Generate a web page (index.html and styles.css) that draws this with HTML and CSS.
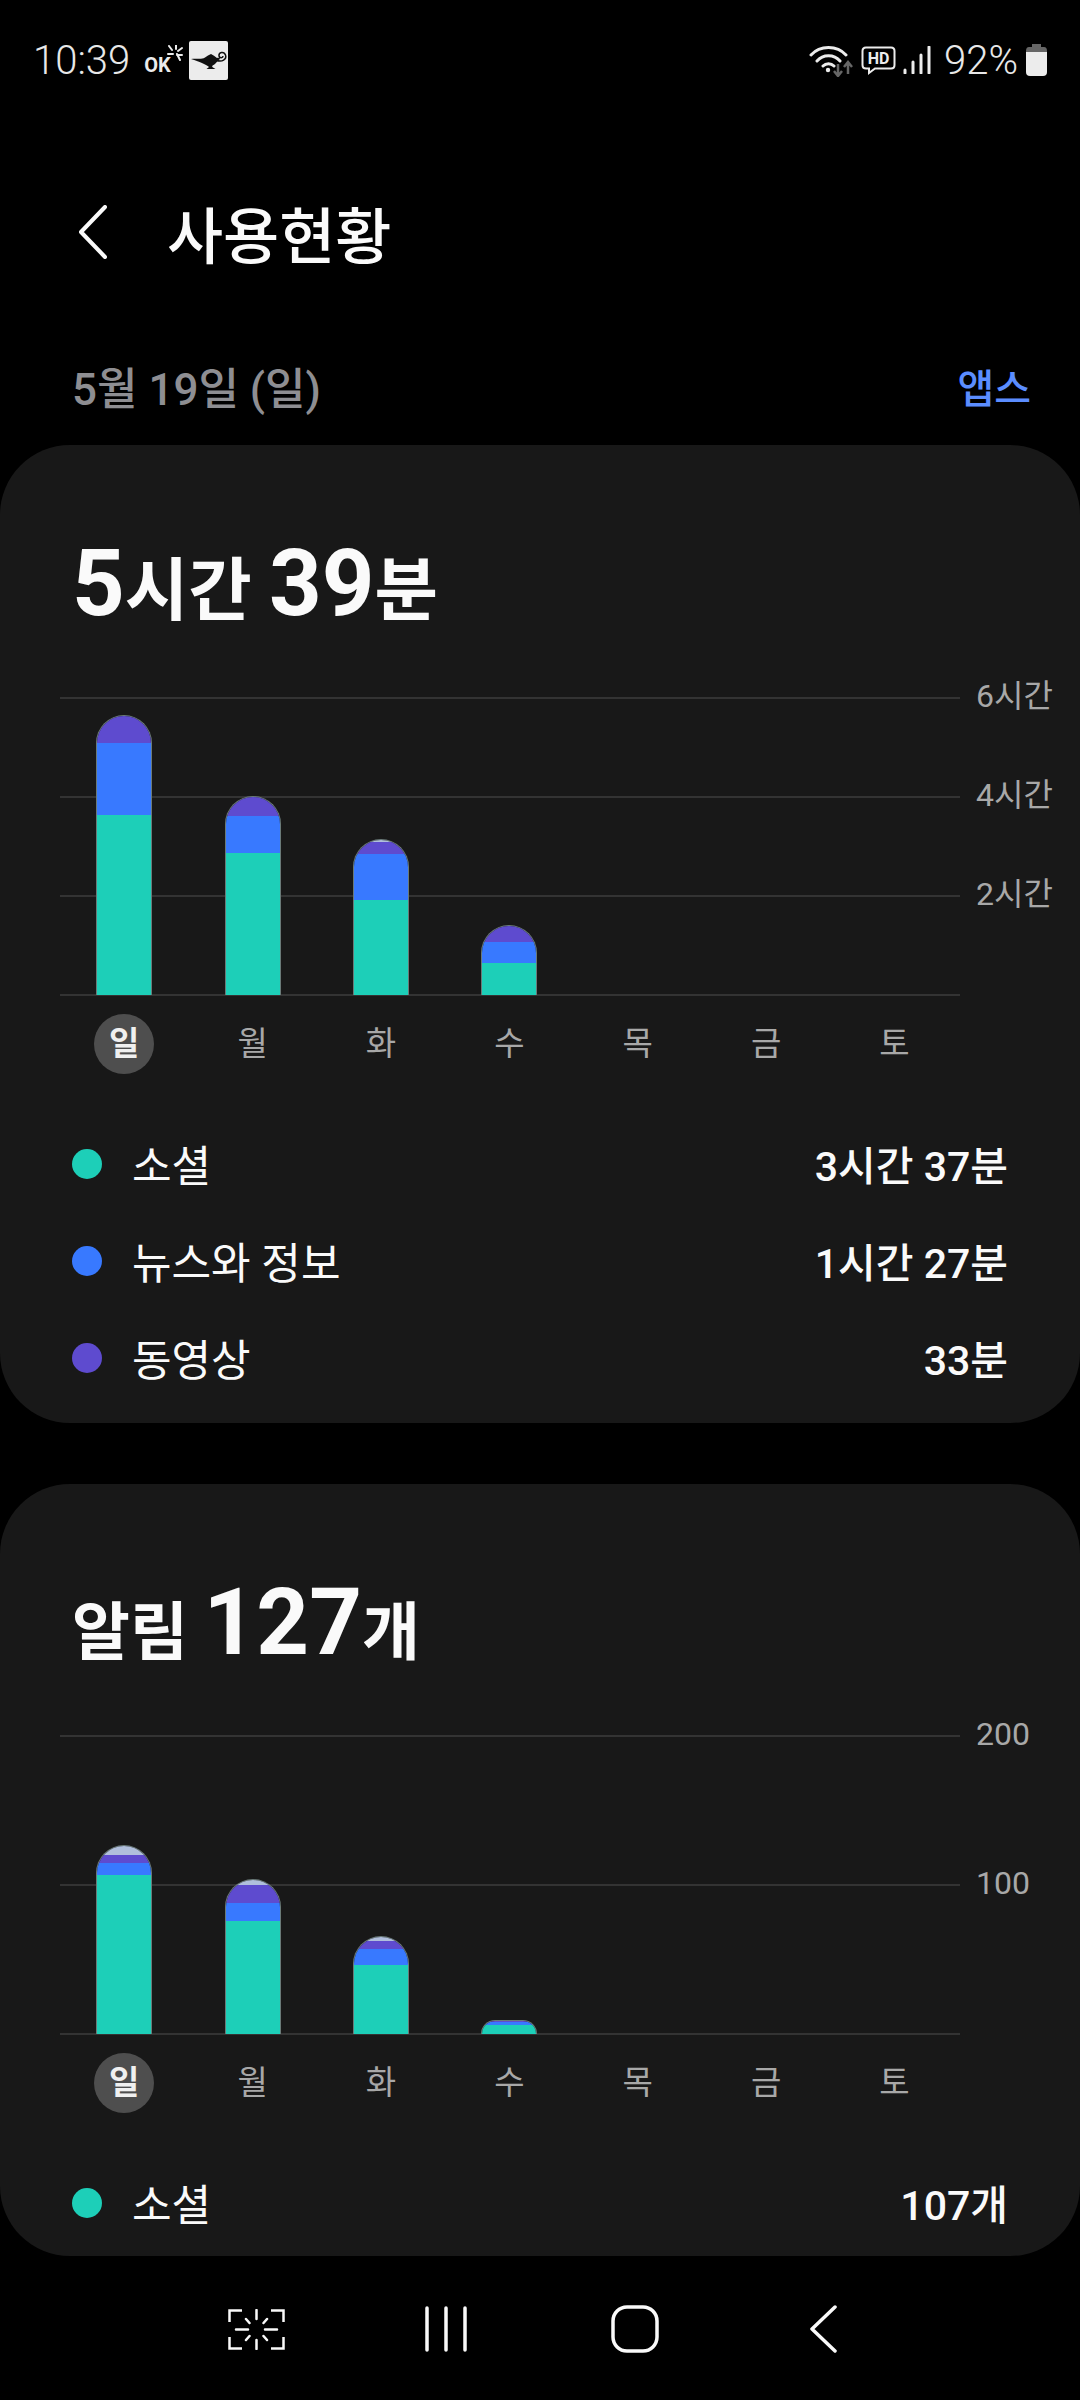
FILE: index.html

```html
<!DOCTYPE html>
<html lang="ko">
<head>
    <meta charset="UTF-8">
    <meta name="viewport" content="width=device-width, initial-scale=1.0">
    <title>사용현황</title>
    <link rel="stylesheet" href="styles.css">
</head>
<body>
    <div class="status-bar">
        <div class="status-left">
            <span class="clock">10:39</span>
            <span class="ok-icon">
                <span class="ok-text">OK</span>
                <svg class="ok-spark" viewBox="0 0 18 18" width="18" height="18">
                    <path d="M4 1 L7 5 M11 0 V4 M17 3 L13 6 M3 9 H8 M17 10 H12 M12 9 L15 15" fill="none" stroke="#ececec" stroke-width="2" stroke-linecap="round"/>
                </svg>
            </span>
            <svg class="lamp-icon" viewBox="0 0 39 39" width="39" height="39">
                <rect width="39" height="39" rx="2" fill="#ececec"/>
                <path d="M2 18 C8 17 12 19 16 16.5 C18 15 20 14 22 13 C24 14 26 15.5 28 17 C30 16.5 31 17 31 18 C29 19 28 21 26 23 C24 24.5 22 25 24 26.5 L26.5 28 H17.5 L20 26 C19 25 17 24 15 23 C11 20.5 6 19.5 2 18 Z" fill="#111"/>
                <path d="M27 19 C33 22 38 18 36.5 14 C35 10 29.5 11 30 15 C30.5 17.5 34 17 34 15" fill="none" stroke="#111" stroke-width="1.5"/>
            </svg>
        </div>
        <div class="status-right">
            <svg class="wifi-icon" viewBox="0 0 45 33" width="45" height="33">
                <path d="M2 11 C11 1 28 1 37 11 M8 17 C14 10 25 10 31 17 M14 22 C17 19 22 19 25 22" fill="none" stroke="#ececec" stroke-width="3" stroke-linecap="round"/>
                <circle cx="19" cy="26" r="2.2" fill="#ececec"/>
                <path d="M29 20 V32 M25 27 L29 32 L33 27 M39 30 V19 M35 23 L39 18 L43 23" fill="none" stroke="#666" stroke-width="2.5"/>
            </svg>
            <svg class="hd-icon" viewBox="0 0 35 29" width="35" height="29">
                <path d="M5 1.5 H30 Q33.5 1.5 33.5 5 V19 Q33.5 22.5 30 22.5 H14 L8 27 V22.5 H5 Q1.5 22.5 1.5 19 V5 Q1.5 1.5 5 1.5 Z" fill="none" stroke="#ececec" stroke-width="2"/>
                <text x="17.5" y="18" class="hd-text">HD</text>
            </svg>
            <svg class="signal-icon" viewBox="0 0 28 28" width="28" height="28">
                <path d="M2 24 V27 M10 16 V27 M18 9 V27 M26 1 V27" fill="none" stroke="#ececec" stroke-width="3" stroke-linecap="round"/>
            </svg>
            <span class="battery-text">92%</span>
            <svg class="battery-icon" viewBox="0 0 21 32" width="21" height="32">
                <path d="M6 0 H15 V3 H18 Q21 3 21 7 V9 H0 V7 Q0 3 3 3 H6 Z" fill="#666"/>
                <path d="M0 8 H21 V28 Q21 32 17 32 H4 Q0 32 0 28 Z" fill="#ececec"/>
            </svg>
        </div>
    </div>

    <div class="top-bar">
        <svg class="back-icon" viewBox="0 0 29 54" width="29" height="54">
            <path d="M27 2 L3 27 L27 52" fill="none" stroke="#fafafa" stroke-width="4" stroke-linecap="round" stroke-linejoin="round"/>
        </svg>
        <h1 class="page-title">사용현황</h1>
    </div>

    <div class="date-row">
        <span class="date">5월 19일 (일)</span>
        <span class="apps-link">앱스</span>
    </div>

    <section class="card">
        <h2 class="total"><span class="num">5</span>시간 <span class="num">39</span>분</h2>
        <div class="chart">
            <div class="grid">
                <div class="tick"><div class="tick-line"></div><span class="tick-label">6시간</span></div>
                <div class="tick"><div class="tick-line"></div><span class="tick-label">4시간</span></div>
                <div class="tick"><div class="tick-line"></div><span class="tick-label">2시간</span></div>
                <div class="tick"><div class="tick-line"></div></div>
            </div>
            <div class="bars">
                <div class="bar">
                    <div class="seg purple" style="height:27px"></div>
                    <div class="seg blue" style="height:72px"></div>
                    <div class="seg teal" style="height:180px"></div>
                </div>
                <div class="bar">
                    <div class="seg purple" style="height:19px"></div>
                    <div class="seg blue" style="height:37px"></div>
                    <div class="seg teal" style="height:142px"></div>
                </div>
                <div class="bar">
                    <div class="seg light" style="height:2px"></div>
                    <div class="seg purple" style="height:12px"></div>
                    <div class="seg blue" style="height:46px"></div>
                    <div class="seg teal" style="height:95px"></div>
                </div>
                <div class="bar">
                    <div class="seg purple" style="height:16px"></div>
                    <div class="seg blue" style="height:21px"></div>
                    <div class="seg teal" style="height:32px"></div>
                </div>
            </div>
        </div>
        <div class="days">
            <span class="day today">일</span>
            <span class="day">월</span>
            <span class="day">화</span>
            <span class="day">수</span>
            <span class="day">목</span>
            <span class="day">금</span>
            <span class="day">토</span>
        </div>
        <ul class="legend">
            <li class="legend-row"><span class="dot teal"></span><span class="legend-name">소셜</span><span class="legend-value">3시간 37분</span></li>
            <li class="legend-row"><span class="dot blue"></span><span class="legend-name">뉴스와 정보</span><span class="legend-value">1시간 27분</span></li>
            <li class="legend-row"><span class="dot purple"></span><span class="legend-name">동영상</span><span class="legend-value">33분</span></li>
        </ul>
    </section>

    <section class="card card-alerts">
        <h2 class="total total-alerts">알림 <span class="num">127</span>개</h2>
        <div class="chart chart-alerts">
            <div class="grid">
                <div class="tick"><div class="tick-line"></div><span class="tick-label">200</span></div>
                <div class="tick"><div class="tick-line"></div><span class="tick-label">100</span></div>
                <div class="tick"><div class="tick-line"></div></div>
            </div>
            <div class="bars">
                <div class="bar">
                    <div class="seg light" style="height:9px"></div>
                    <div class="seg purple" style="height:8px"></div>
                    <div class="seg blue" style="height:12px"></div>
                    <div class="seg teal" style="height:159px"></div>
                </div>
                <div class="bar">
                    <div class="seg light" style="height:5px"></div>
                    <div class="seg purple" style="height:18px"></div>
                    <div class="seg blue" style="height:18px"></div>
                    <div class="seg teal" style="height:113px"></div>
                </div>
                <div class="bar">
                    <div class="seg light" style="height:4px"></div>
                    <div class="seg purple" style="height:8px"></div>
                    <div class="seg blue" style="height:16px"></div>
                    <div class="seg teal" style="height:69px"></div>
                </div>
                <div class="bar">
                    <div class="seg purple" style="height:1px"></div>
                    <div class="seg blue" style="height:3px"></div>
                    <div class="seg teal" style="height:9px"></div>
                </div>
            </div>
        </div>
        <div class="days">
            <span class="day today">일</span>
            <span class="day">월</span>
            <span class="day">화</span>
            <span class="day">수</span>
            <span class="day">목</span>
            <span class="day">금</span>
            <span class="day">토</span>
        </div>
        <ul class="legend">
            <li class="legend-row"><span class="dot teal"></span><span class="legend-name">소셜</span><span class="legend-value">107개</span></li>
        </ul>
    </section>

    <nav class="nav-bar">
        <svg viewBox="0 0 57 41" width="57" height="41">
            <path d="M1.5 13 V1.5 H14 M43 1.5 H55.5 V13 M1.5 28 V39.5 H14 M43 39.5 H55.5 V28" fill="none" stroke="#fafafa" stroke-width="2.5"/>
            <path d="M28.5 1 V10 M28.5 31 V40 M8 20.5 H20 M37 20.5 H49 M18 10 L21.5 14 M39 10 L35.5 14 M18 31 L21.5 27 M39 31 L35.5 27" fill="none" stroke="#fafafa" stroke-width="2.5" stroke-linecap="round"/>
        </svg>
        <svg viewBox="0 0 42 46" width="42" height="46">
            <path d="M2 2 V44 M21 2 V44 M40 2 V44" fill="none" stroke="#fafafa" stroke-width="3.5" stroke-linecap="round"/>
        </svg>
        <svg viewBox="0 0 48 48" width="48" height="48">
            <rect x="2" y="2" width="44" height="44" rx="14" fill="none" stroke="#fafafa" stroke-width="3.5"/>
        </svg>
        <svg viewBox="0 0 27 48" width="27" height="48">
            <path d="M25 2 L2 24 L25 46" fill="none" stroke="#fafafa" stroke-width="3.5" stroke-linecap="round" stroke-linejoin="round"/>
        </svg>
    </nav>
</body>
</html>
```

FILE: styles.css

```css
* {
    box-sizing: border-box;
}
body {
    width: 1080px;
    height: 2400px;
    margin: 0;
    overflow: hidden;
    background-color: #000;
    color: #fafafa;
    font-family: Roboto, "Noto Sans CJK KR", sans-serif;
}

/* status bar */
.status-bar {
    display: flex;
    justify-content: space-between;
    align-items: center;
    height: 120px;
    padding: 0 33px;
}
.status-left,
.status-right {
    display: flex;
    align-items: center;
}
.clock {
    font-size: 40px;
    font-weight: 300;
    color: #e8e8e8;
}
.ok-icon {
    display: flex;
    align-items: flex-start;
    margin-left: 14px;
}
.ok-text {
    margin-top: 10px;
    font-size: 20px;
    font-weight: 700;
    line-height: 20px;
    color: #ececec;
}
.ok-spark {
    margin-left: -6px;
}
.lamp-icon {
    margin-left: 6px;
}
.status-right {
    gap: 7px;
}
.hd-text {
    font-size: 16px;
    font-weight: 700;
    text-anchor: middle;
    fill: #ececec;
}
.battery-text {
    margin: 0 1px 0 6px;
    font-size: 40px;
    font-weight: 300;
    color: #e8e8e8;
}

/* header */
.top-bar {
    display: flex;
    align-items: center;
    gap: 60px;
    height: 224px;
    padding-left: 78px;
}
.page-title {
    margin: 0;
    font-size: 61px;
    font-weight: 500;
}
.date-row {
    display: flex;
    justify-content: space-between;
    align-items: center;
    height: 88px;
    margin-bottom: 13px;
    padding: 0 49px 5px 72px;
}
.date {
    font-size: 44px;
    font-weight: 500;
    color: #8e8e92;
}
.apps-link {
    font-size: 40px;
    font-weight: 500;
    color: #5b8dff;
}

/* cards */
.card {
    padding: 79px 0 17px;
    border-radius: 70px;
    background-color: #181818;
}
.card-alerts {
    margin-top: 61px;
    padding-bottom: 5px;
}
.total {
    height: 120px;
    margin: 0 0 53px;
    padding-left: 72px;
    font-size: 69px;
    font-weight: 700;
    line-height: 120px;
}
.total-alerts {
    margin-bottom: 52px;
    font-size: 63px;
}
.num {
    font-size: 92px;
}

/* chart */
.chart {
    position: relative;
    height: 299px;
    margin-left: 60px;
}
.chart-alerts {
    height: 300px;
}
.grid {
    display: flex;
    flex-direction: column;
    justify-content: space-between;
    height: 100%;
}
.tick {
    display: flex;
    align-items: center;
    height: 2px;
}
.tick-line {
    flex: none;
    width: 900px;
    height: 2px;
    background-color: #333;
}
.tick-label {
    margin: 0 0 4px 16px;
    font-size: 32px;
    line-height: 40px;
    color: #a8a8a8;
    white-space: nowrap;
}
.bars {
    position: absolute;
    left: 0;
    bottom: 1px;
    display: grid;
    grid-template-columns: repeat(7, 128.4px);
    justify-items: center;
    align-items: end;
}
.bar {
    display: flex;
    flex-direction: column;
    width: 56px;
    overflow: hidden;
    border: 1px solid #6a7a78;
    border-bottom: none;
    border-radius: 28px 28px 0 0;
}
.teal {
    background-color: #1dcfb8;
}
.blue {
    background-color: #3879ff;
}
.purple {
    background-color: #5e4bcf;
}
.light {
    background-color: #b0bfdc;
}

/* week labels */
.days {
    display: grid;
    grid-template-columns: repeat(7, 128.4px);
    justify-items: center;
    margin: 18px 0 0 60px;
}
.day {
    width: 60px;
    height: 60px;
    border-radius: 50%;
    font-size: 33px;
    line-height: 60px;
    text-align: center;
    color: #a8a8a8;
}
.today {
    background-color: #4e4e4e;
    font-weight: 700;
    color: #f0f0f0;
}

/* legend */
.legend {
    margin: 41px 0 0;
    padding: 0 72px;
    list-style: none;
}
.legend-row {
    display: flex;
    align-items: center;
    height: 97px;
}
.dot {
    width: 30px;
    height: 30px;
    border-radius: 50%;
}
.legend-name {
    flex: 1;
    margin: 0 0 2px 30px;
    font-size: 43px;
}
.legend-value {
    margin-bottom: 2px;
    font-size: 41px;
    font-weight: 500;
}

/* navigation bar */
.nav-bar {
    display: grid;
    grid-template-columns: repeat(4, 189px);
    justify-items: center;
    align-items: center;
    height: 146px;
    padding-left: 162px;
}
```
